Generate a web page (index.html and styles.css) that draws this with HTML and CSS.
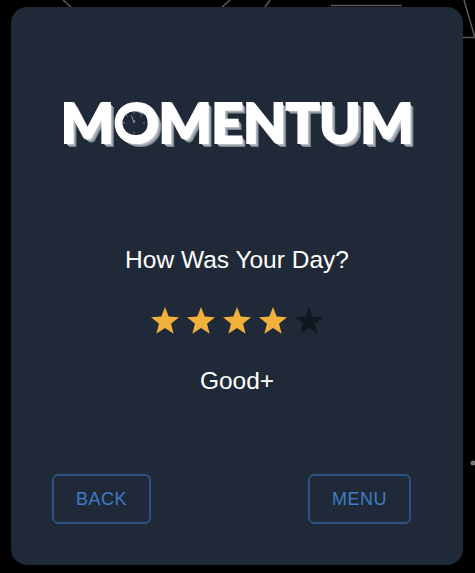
FILE: index.html
```html
<!DOCTYPE html>
<html lang="en">
<head>
  <meta charset="UTF-8">
  <title>Momentum</title>
  <link rel="stylesheet" href="styles.css">
</head>
<body>
  <!-- lines of the backdrop behind the card -->
  <svg class="backdrop" width="475" height="573" viewBox="0 0 475 573">
    <g fill="none" stroke="#5a5a5a" stroke-width="1.500">
      <path d="M63 0L71 7"/>
      <path d="M230 0L222 7"/>
      <path d="M270 0L265 7"/>
      <path d="M331 5.500H402"/>
      <path d="M464 0L475 38"/>
      <path d="M463 37.500H475"/>
    </g>
    <circle cx="473" cy="463" r="2.500" fill="#777"/>
  </svg>

  <main class="card">
    <div class="logo">
      <h1 class="logo-text">MOMENTUM</h1>
      <svg class="clock" width="24" height="24" viewBox="0 0 24 24">
        <circle cx="12" cy="12" r="11.500" fill="#1f2937"/>
        <g stroke="#9aa3ad" stroke-width="0.700" fill="none">
          <path d="M12 1v2M12 21v2M1 12h2M21 12h2M4 4l1.500 1.500M20 4l-1.500 1.500"/>
          <path d="M12 12L9.500 4.500" stroke="#c5cad0"/>
          <path d="M12 12l1-3"/>
        </g>
      </svg>
    </div>

    <p class="question">How Was Your Day?</p>

    <div class="stars">
      <svg class="star on" viewBox="0 0 30 30"><path d="M15 1l3.700 9.600 10.300.600-8 6.500 2.700 10-8.700-5.600-8.700 5.600 2.700-10-8-6.500 10.300-.600z"/></svg>
      <svg class="star on" viewBox="0 0 30 30"><path d="M15 1l3.700 9.600 10.300.600-8 6.500 2.700 10-8.700-5.600-8.700 5.600 2.700-10-8-6.500 10.300-.600z"/></svg>
      <svg class="star on" viewBox="0 0 30 30"><path d="M15 1l3.700 9.600 10.300.600-8 6.500 2.700 10-8.700-5.600-8.700 5.600 2.700-10-8-6.500 10.300-.600z"/></svg>
      <svg class="star on" viewBox="0 0 30 30"><path d="M15 1l3.700 9.600 10.300.600-8 6.500 2.700 10-8.700-5.600-8.700 5.600 2.700-10-8-6.500 10.300-.600z"/></svg>
      <svg class="star" viewBox="0 0 30 30"><path d="M15 1l3.700 9.600 10.300.600-8 6.500 2.700 10-8.700-5.600-8.700 5.600 2.700-10-8-6.500 10.300-.600z"/></svg>
    </div>

    <p class="rating">Good+</p>

    <div class="actions">
      <button class="btn btn-back">BACK</button>
      <button class="btn btn-menu">MENU</button>
    </div>
  </main>
</body>
</html>
```

FILE: styles.css
```css
* { box-sizing: border-box; }

html, body { height: 100%; }

body {
  margin: 0;
  padding: 7px 12px 8px 11px;
  background-color: #000;
  font-family: "Liberation Sans", Arial, sans-serif;
  overflow: hidden;
}

.backdrop { position: absolute; top: 0; left: 0; }

.card {
  position: relative;
  display: flex;
  flex-direction: column;
  align-items: center;
  height: 558px;
  padding: 88px 41px 41px;
  background-color: #1f2937;
  border-radius: 16px;
}

.logo { position: relative; height: 54px; }

.logo-text {
  margin: 0;
  font-family: Lato, Inter, sans-serif;
  font-size: 56px;
  font-weight: 900;
  line-height: 54px;
  letter-spacing: -0.500px;
  color: #fff;
  white-space: nowrap;
  -webkit-text-stroke: 2px #fff;
  text-shadow: 1px 1px 0 #d5d9de, 2px 2px 0 #b9bec5, 3px 3px 0 #9ea4ad, 4px 4px 0 #7d848e;
}

.clock { position: absolute; top: 16px; left: 61px; }

.question {
  margin: 97px 0 0;
  font-size: 24.500px;
  line-height: 28px;
  color: #fff;
}

.stars {
  display: flex;
  gap: 6px;
  margin-top: 32px;
}

.star { width: 30px; height: 30px; fill: #10171f; }
.star.on { fill: #f2b03c; }

.rating {
  margin: 31px 0 0;
  font-size: 24.500px;
  line-height: 28px;
  color: #fff;
}

.actions {
  display: flex;
  justify-content: space-between;
  width: 100%;
  padding-right: 11px;
  margin-top: auto;
}

.btn {
  height: 50px;
  padding: 0;
  background: none;
  border: 2px solid #2c5282;
  border-radius: 6px;
  font-family: inherit;
  font-size: 18px;
  letter-spacing: 0.500px;
  color: #3f7bc9;
}

.btn-back { width: 99px; }
.btn-menu { width: 103px; }
```
